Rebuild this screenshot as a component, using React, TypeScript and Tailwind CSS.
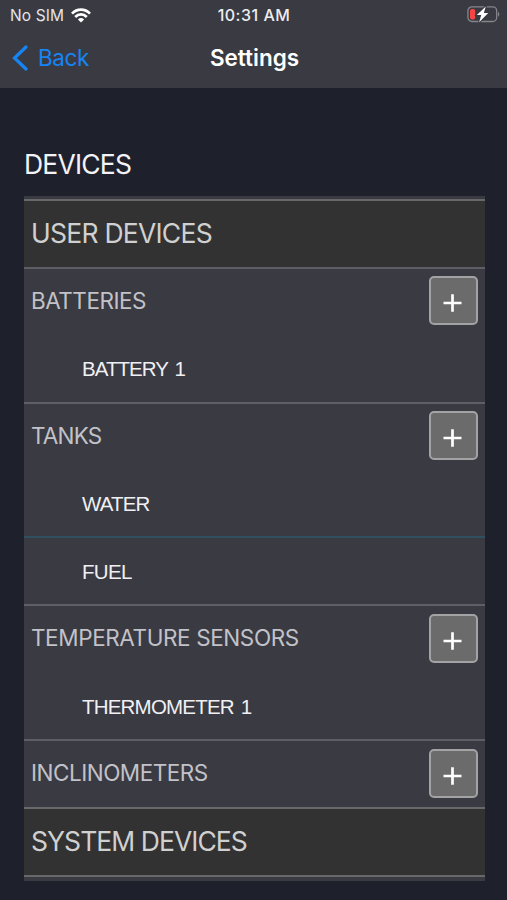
import React from "react";

const sf = "font-['Inter','Liberation_Sans',sans-serif]";

function AddButton() {
  return (
    <button className="mr-[7px] flex h-[49px] w-[49px] items-center justify-center rounded-[5px] border-2 border-[#a3a3a6] bg-[#6b6b6b]">
      <svg width="19" height="18" viewBox="0 0 19 18" className="mt-[5px] mr-[2px]">
        <path d="M9.5 0.2V17.8M0.5 9H18.5" stroke="#fff" strokeWidth="2.7" />
      </svg>
    </button>
  );
}

function Banner({ label, spacing }: { label: string; spacing: string }) {
  return (
    <div className="flex h-[68px] items-center border-t-2 border-[#66686a] bg-[#323232] pb-[2px] pl-[7px]">
      <span className={`text-[26.5px] leading-8 text-[#d0d0d0] ${spacing}`}>{label}</span>
    </div>
  );
}

function Group({ label, height, spacing }: { label: string; height: string; spacing: string }) {
  return (
    <div className={`flex items-center justify-between border-t-2 border-[#5e5f66] pb-[2px] pl-[7px] ${height}`}>
      <span className={`text-[22.5px] leading-7 text-[#c2c2c8] ${spacing}`}>{label}</span>
      <AddButton />
    </div>
  );
}

function Item({ label, height, spacing }: { label: string; height: string; spacing: string }) {
  return (
    <div className={`flex items-center pt-[2px] pl-[58px] ${height}`}>
      <span className={`font-['Liberation_Sans',sans-serif] text-[20.5px] leading-7 text-[#f0f0f4] [word-spacing:2px] ${spacing}`}>{label}</span>
    </div>
  );
}

export default function App() {
  return (
    <div className={`flex h-[900px] w-[507px] flex-col overflow-hidden whitespace-nowrap bg-[#1e202c] ${sf}`}>
      <header className="h-[88px] bg-[#3a3a42] text-white">
        <div className="grid h-[30px] grid-cols-3 items-center pr-[7px] pl-[8px]">
          <div className="flex items-center gap-[7px] pl-[2px]">
            <span className="pt-[2px] text-[15.5px] tracking-[0.1px] text-[#e4e4e8]">No SIM</span>
            <svg width="20" height="15" viewBox="0 0 20 15" fill="none" stroke="#fff" strokeWidth="2.7">
              <path d="M1 5.6C6 .3 14 .3 19 5.6M4.2 9C7.5 5.6 12.5 5.6 15.8 9" />
              <path d="M6.9 11.4Q10 8.7 13.1 11.4L10 14.5Z" fill="#fff" stroke="none" />
            </svg>
          </div>
          <span className="text-center text-[16px] font-medium tracking-[0.5px] text-[#ededf0]">10:31 AM</span>
          <svg className="justify-self-end" width="33" height="18" viewBox="0 0 33 18">
            <rect x="0.9" y="0.9" width="28.8" height="14.6" rx="4" fill="none" stroke="#85858b" strokeWidth="1.3" />
            <path d="M31 5.8Q33.6 8.2 31 10.7Z" fill="#85858b" />
            <rect x="3" y="3" width="5.2" height="10.5" rx="2" fill="#f94444" />
            <path d="M18.8 0.4L9.8 9h4.5l-2.2 7.2 9.2-9.2h-4.5Z" fill="#fff" stroke="#3a3a42" strokeWidth="2" paintOrder="stroke" />
          </svg>
        </div>
        <div className="grid h-[56px] grid-cols-3 items-center pl-3">
          <button className="flex items-center gap-[10px] text-[#1784f3]">
            <svg width="16" height="26" viewBox="0 0 16 26" fill="none" stroke="currentColor" strokeWidth="3.2" strokeLinecap="round">
              <path d="M14 2L2.5 13 14 24" />
            </svg>
            <span className="text-[22.5px] leading-7 tracking-[-0.4px]">Back</span>
          </button>
          <h1 className="pr-[10px] text-center text-[22.5px] leading-7 font-semibold">Settings</h1>
        </div>
      </header>
      <main className="px-[24px] pt-[60px]">
        <h2 className="h-[48px] text-[26.5px] leading-[33px] tracking-[-0.8px] text-[#f2f2f7]">DEVICES</h2>
        <section className="mr-[-2px] h-[685px] bg-[#3a3a42] pt-[3px]">
          <Banner label="USER DEVICES" spacing="tracking-[-0.75px]" />
          <Group label="BATTERIES" height="h-[67px]" spacing="tracking-[-0.5px]" />
          <Item label="BATTERY 1" height="h-[68px]" spacing="tracking-[-0.95px]" />
          <Group label="TANKS" height="h-[67px]" spacing="tracking-[-0.8px]" />
          <Item label="WATER" height="h-[67px]" spacing="tracking-[-0.85px]" />
          <div className="border-t-2 border-[#30505f]">
            <Item label="FUEL" height="h-[66px]" spacing="tracking-[-0.7px]" />
          </div>
          <Group label="TEMPERATURE SENSORS" height="h-[68px]" spacing="tracking-[-0.4px]" />
          <Item label="THERMOMETER 1" height="h-[67px]" spacing="tracking-[-0.8px]" />
          <Group label="INCLINOMETERS" height="h-[68px]" spacing="tracking-[-0.5px]" />
          <Banner label="SYSTEM DEVICES" spacing="tracking-[-0.95px]" />
          <div className="border-t-2 border-[#66686a]" />
        </section>
      </main>
    </div>
  );
}
